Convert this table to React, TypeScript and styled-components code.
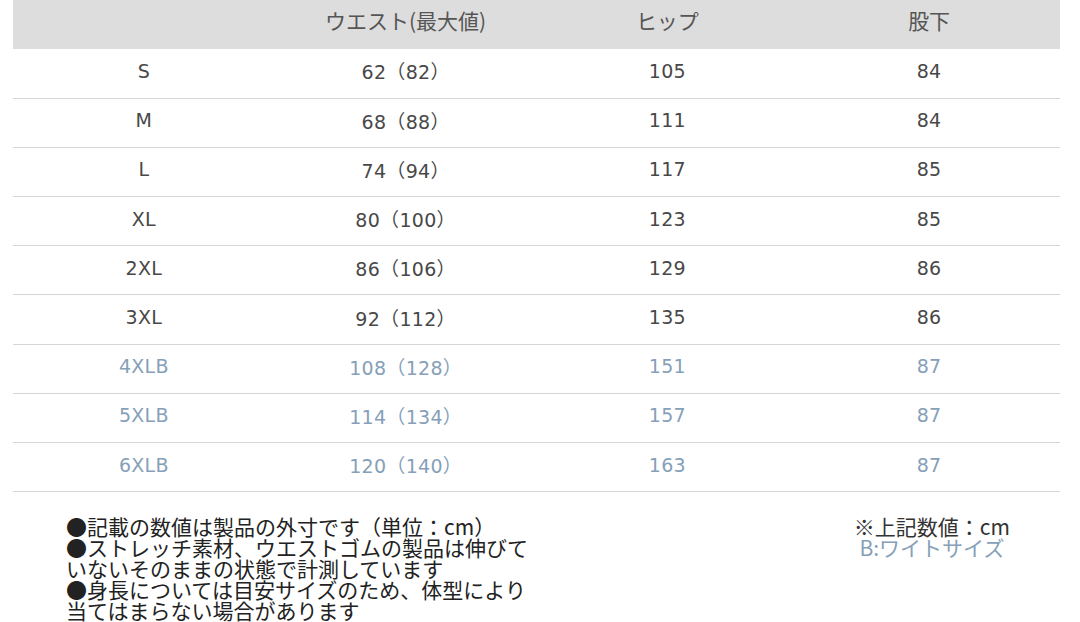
import React from 'react';
import styled, {createGlobalStyle} from 'styled-components';

const GlobalStyle = createGlobalStyle`
  html, body {
    margin: 0;
    padding: 0;
    background: #ffffff;
  }
  body {
    font-family: "DejaVu Sans", "Noto Sans CJK JP", sans-serif;
    color: #444444;
  }
`;

const Page = styled.div`
  width: 1080px;
  height: 622px;
  overflow: hidden;
  padding-left: 13px;
  box-sizing: border-box;
`;

const SizeTable = styled.table`
  width: 1047px;
  border-collapse: collapse;
  table-layout: fixed;
`;

const HeadCell = styled.th`
  height: 49px;
  padding: 0 0 10px;
  box-sizing: border-box;
  background-color: #dddddd;
  font-weight: normal;
  font-size: 21px;
  color: #555555;
  text-align: center;
  vertical-align: middle;
  font-family: "Noto Sans CJK JP", "DejaVu Sans", sans-serif;
`;

const Row = styled.tr<{ $wide?: boolean }>`
  color: ${p => p.$wide ? '#85a0b8' : '#484848'};
  border-bottom: 1px solid #d6d6d6;
`;

const Cell = styled.td`
  height: 49.2px;
  padding: 0 0 5px;
  box-sizing: border-box;
  text-align: center;
  vertical-align: middle;
  font-size: 19px;
  letter-spacing: 0.3px;
`;

const Paren = styled.span`
  font-family: "Noto Sans CJK JP", sans-serif;
`;

const Footer = styled.div`
  display: grid;
  grid-template-columns: 540px 1fr;
  padding-top: 24px;
`;

const Notes = styled.div`
  padding-left: 53px;
  width: 470px;
  font-family: "Noto Sans CJK JP", sans-serif;
  font-size: 21px;
  line-height: 21px;
  color: #222222;
`;

const Legend = styled.div`
  justify-self: end;
  margin-right: 70px;
  display: flex;
  flex-direction: column;
  align-items: center;
  font-family: "Noto Sans CJK JP", sans-serif;
  font-size: 21px;
  line-height: 21px;
  color: #333333;
`;

const WideNote = styled.span`
  color: #85a0b8;
`;

const rows = [
  {size: 'S', waist: 62, max: 82, hip: 105, inseam: 84},
  {size: 'M', waist: 68, max: 88, hip: 111, inseam: 84},
  {size: 'L', waist: 74, max: 94, hip: 117, inseam: 85},
  {size: 'XL', waist: 80, max: 100, hip: 123, inseam: 85},
  {size: '2XL', waist: 86, max: 106, hip: 129, inseam: 86},
  {size: '3XL', waist: 92, max: 112, hip: 135, inseam: 86},
  {size: '4XLB', waist: 108, max: 128, hip: 151, inseam: 87, wide: true},
  {size: '5XLB', waist: 114, max: 134, hip: 157, inseam: 87, wide: true},
  {size: '6XLB', waist: 120, max: 140, hip: 163, inseam: 87, wide: true},
];

const App = () => {
  return (
    <Page>
      <GlobalStyle/>
      <SizeTable>
        <thead>
          <tr>
            <HeadCell></HeadCell>
            <HeadCell>ウエスト(最大値)</HeadCell>
            <HeadCell>ヒップ</HeadCell>
            <HeadCell>股下</HeadCell>
          </tr>
        </thead>
        <tbody>
          {rows.map(r => (
            <Row key={r.size} $wide={r.wide}>
              <Cell>{r.size}</Cell>
              <Cell>{r.waist}<Paren>（</Paren>{r.max}<Paren>）</Paren></Cell>
              <Cell>{r.hip}</Cell>
              <Cell>{r.inseam}</Cell>
            </Row>
          ))}
        </tbody>
      </SizeTable>
      <Footer>
        <Notes>
          ●記載の数値は製品の外寸です（単位：cm）<br/>
          ●ストレッチ素材、ウエストゴムの製品は伸びていないそのままの状態で計測しています<br/>
          ●身長については目安サイズのため、体型により当てはまらない場合があります
        </Notes>
        <Legend>
          <span>※上記数値：cm</span>
          <WideNote>B:ワイトサイズ</WideNote>
        </Legend>
      </Footer>
    </Page>
  );
};

export default App;
